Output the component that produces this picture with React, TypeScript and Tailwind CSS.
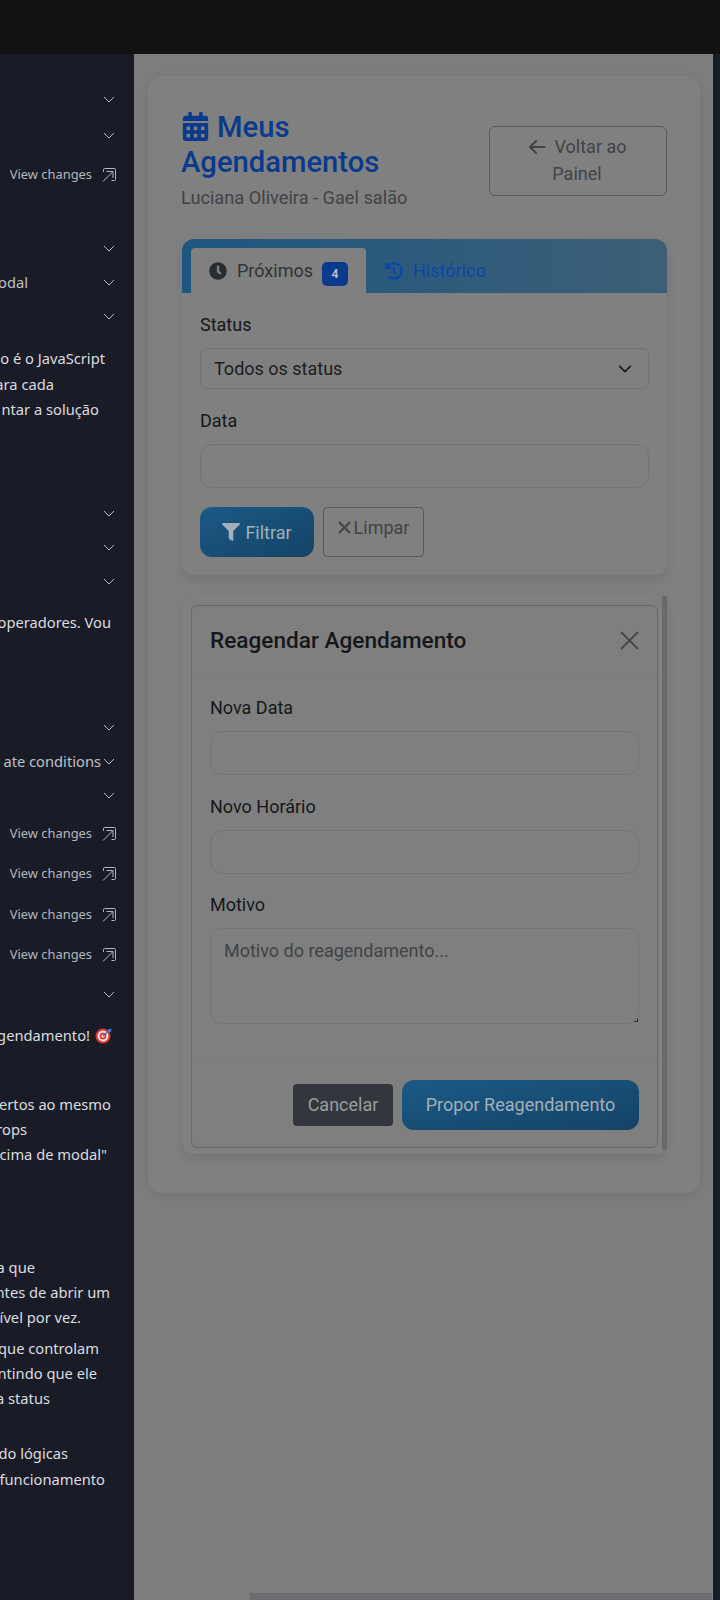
import React from "react";
import { FaCalendarAlt, FaClock, FaHistory, FaFilter } from "react-icons/fa";

function ChevronIcon() {
  return (
    <svg className="shrink-0" width="12" height="7" viewBox="0 0 12 7" fill="none" stroke="#b9bbc1" strokeWidth="1">
      <path d="M1 1l5 5 5-5" />
    </svg>
  );
}

function Chevron({ className = "" }: { className?: string }) {
  return (
    <div className={`h-6 flex items-center justify-end pr-[19px] ${className}`}>
      <ChevronIcon />
    </div>
  );
}

function ChevronText({ text, className = "", gap = "mr-[2px]" }: { text: string; className?: string; gap?: string }) {
  return (
    <div className={`h-6 flex items-center justify-end pr-[19px] overflow-hidden whitespace-nowrap text-[14.7px] text-[#bfc1c6] ${className}`}>
      <span className={`shrink-0 ${gap}`}>{text}</span>
      <ChevronIcon />
    </div>
  );
}

function ViewChanges({ className = "" }: { className?: string }) {
  return (
    <div className={`h-6 flex items-center justify-end pr-[18px] text-[12.9px] text-[#b4b6bc] whitespace-nowrap ${className}`}>
      <span className="mr-[10px]">View changes</span>
      <svg width="14" height="14" viewBox="0 0 14 14" fill="none" stroke="#b4b6bc" strokeWidth="1">
        <path d="M1.5 4V1.5a1 1 0 0 1 1-1h10a1 1 0 0 1 1 1v10a1 1 0 0 1-1 1H9.5" />
        <path d="M1 13.5L10.5 4M4.5 3.5h6.5V10" />
      </svg>
    </div>
  );
}

function Line({ text, className = "" }: { text: string; className?: string }) {
  return (
    <div className={`h-6 flex items-center justify-end overflow-hidden whitespace-nowrap text-[14.7px] text-[#dcdde0] ${className}`}>
      <span className="shrink-0">{text}</span>
    </div>
  );
}

function FieldLabel({ children, className = "" }: { children: React.ReactNode; className?: string }) {
  return <label className={`block text-[18px] leading-[27px] text-[#15171a] ${className}`}>{children}</label>;
}

function TextBox({ className = "" }: { className?: string }) {
  return (
    <input
      readOnly
      className={`block w-full rounded-xl border border-[#727476] bg-transparent outline-none ${className}`}
    />
  );
}

export default function App() {
  return (
    <div className="w-[720px] h-[1600px] overflow-hidden bg-[#111111] flex flex-col font-['Roboto',sans-serif] relative">
      <div className="h-[54px] shrink-0 bg-[#121212]" />
      <div className="flex-1 flex min-h-0">
        <aside className="w-[134px] shrink-0 bg-[#191c26] font-['Noto_Sans',sans-serif] overflow-hidden">
          <Chevron className="mt-[33px]" />
          <Chevron className="mt-[12px]" />
          <ViewChanges className="mt-[16px]" />
          <Chevron className="mt-[49px]" />
          <ChevronText text="odal" gap="mr-[75px]" className="mt-[10px]" />
          <Chevron className="mt-[10px]" />
          <Line text="o é o JavaScript" className="mt-[18px] pr-[29px]" />
          <Line text="ara cada" className="mt-[2px] pr-[80px]" />
          <Line text="ntar a solução" className="mt-[1px] pr-[35px]" />
          <Chevron className="mt-[80px]" />
          <Chevron className="mt-[10px]" />
          <Chevron className="mt-[10px]" />
          <Line text="operadores. Vou" className="mt-[17px] pr-[23px]" />
          <Chevron className="mt-[81px]" />
          <ChevronText text="ate conditions" className="mt-[10px]" />
          <Chevron className="mt-[10px]" />
          <ViewChanges className="mt-[15px]" />
          <ViewChanges className="mt-[16px]" />
          <ViewChanges className="mt-[17px]" />
          <ViewChanges className="mt-[16px]" />
          <Chevron className="mt-[15px]" />
          <div className="mt-[17px] h-6 flex items-center justify-end overflow-hidden whitespace-nowrap text-[14.7px] text-[#dcdde0] pr-[22px]">
            <span className="shrink-0">gendamento!</span>
            <svg className="shrink-0 ml-[5px]" width="17" height="17" viewBox="0 0 17 17">
              <circle cx="8" cy="9" r="7.5" fill="#e2382f" />
              <circle cx="8" cy="9" r="5.4" fill="#f3f1f0" />
              <circle cx="8" cy="9" r="3.5" fill="#e2382f" />
              <circle cx="8" cy="9" r="1.6" fill="#f3f1f0" />
              <path d="M8 9L14 3.5" stroke="#3a6fb5" strokeWidth="1.2" />
              <path d="M12.5 2.5L16.5 1.5L16 5L13.5 5.5Z" fill="#2f7fd0" />
            </svg>
          </div>
          <Line text="ertos ao mesmo" className="mt-[45px] pr-[23px]" />
          <Line text="rops" className="mt-[1px] pr-[107px]" />
          <Line text='cima de modal"' className="mt-[1px] pr-[27px]" />
          <Line text="a que" className="mt-[89px] pr-[99px]" />
          <Line text="ntes de abrir um" className="mt-[1px] pr-[24px]" />
          <Line text="ível por vez." className="mt-[1px] pr-[53px]" />
          <Line text="que controlam" className="mt-[7px] pr-[35px]" />
          <Line text="ntindo que ele" className="mt-[1px] pr-[37px]" />
          <Line text="a status" className="mt-[1px] pr-[84px]" />
          <Line text="do lógicas" className="mt-[31px] pr-[66px]" />
          <Line text="funcionamento" className="mt-[2px] pr-[29px]" />
        </aside>

        <main className="flex-1 min-w-0 bg-[#7d7d7e] pl-[14px] pr-[13px] pt-[22px] relative">
          <div className="rounded-[14px] bg-[#808080] shadow-[0_2px_10px_rgba(0,0,0,0.08)] pl-[34px] pr-[33px] pt-[34px] pb-[39px]">
            <div className="flex items-center justify-between -ml-[1px]">
              <div className="w-[290px]">
                <h1 className="text-[29.2px] leading-[35px] font-medium text-[#0a3a8c]">
                  <FaCalendarAlt className="inline-block align-[-4px] mr-[7px] text-[29px]" />
                  Meus Agendamentos
                </h1>
                <p className="mt-[4px] text-[18.2px] leading-[27px] text-[#404347]">Luciana Oliveira - Gael salão</p>
              </div>
              <button className="mt-[1px] w-[178px] h-[70px] rounded-md border border-[#55585c] pb-[2px] text-[18px] leading-[27px] text-[#404347] text-center pl-[18px] pr-[20px]">
                <svg className="inline-block mr-[9px] align-[-2px]" width="18" height="16" viewBox="0 0 18 16" fill="none" stroke="currentColor" strokeWidth="2" strokeLinecap="round" strokeLinejoin="round">
                  <path d="M16.5 8H2M8 2L2 8l6 6" />
                </svg>
                Voltar ao Painel
              </button>
            </div>

            <section className="mt-[28px] rounded-xl bg-[#808080] shadow-[0_4px_12px_rgba(0,0,0,0.1)]">
              <div className="h-[54px] rounded-t-xl bg-gradient-to-r from-[#1d5680] to-[#3c5f77] pl-[9px] pt-[9px] flex">
                <div className="w-[175px] h-[45px] rounded-t-[4px] bg-[#808080] flex items-center pl-[18px] text-[18px] text-[#303337]">
                  <FaClock className="text-[18px] text-[#2a2d30]" />
                  <span className="ml-[10px]">Próximos</span>
                  <span className="ml-[9px] mt-[6px] w-[26px] h-[24px] rounded-[5px] bg-[#0a3a8c] flex items-center justify-center text-[12px] font-bold text-[#b3bfd6]">4</span>
                </div>
                <div className="flex items-center pl-[19px] text-[18px] text-[#0b46a8]">
                  <FaHistory className="text-[18px]" />
                  <span className="ml-[10px]">Histórico</span>
                </div>
              </div>
              <div className="px-[18px] pt-[18px] pb-[18px]">
                <FieldLabel>Status</FieldLabel>
                <div className="mt-[10px] relative">
                  <select className="block w-full h-[41px] appearance-none rounded-md border border-[#727476] bg-transparent pl-[13px] text-[18px] text-[#1b1d1f] outline-none">
                    <option>Todos os status</option>
                  </select>
                  <svg className="absolute right-[17px] top-[14px]" width="14" height="14" viewBox="0 0 16 16" fill="none" stroke="#1b1d1f" strokeWidth="2" strokeLinecap="round" strokeLinejoin="round">
                    <path d="M2 5l6 6 6-6" />
                  </svg>
                </div>
                <FieldLabel className="mt-[18px]">Data</FieldLabel>
                <TextBox className="mt-[10px] h-[44px]" />
                <div className="mt-[19px] flex gap-[9px]">
                  <button className="w-[114px] h-[50px] rounded-xl bg-gradient-to-br from-[#1a5a86] to-[#154366] flex items-center justify-center text-[18px] text-[#a3afb9]">
                    <FaFilter className="text-[18px] mr-[5px]" />
                    Filtrar
                  </button>
                  <button className="w-[101px] h-[50px] rounded-[4px] border border-[#55585c] flex items-center justify-center pb-[9px] text-[18px] text-[#404347]">
                    <svg className="mr-[3px]" width="13" height="13" viewBox="0 0 13 13" fill="none" stroke="currentColor" strokeWidth="2">
                      <path d="M1 1l11 11M12 1L1 12" />
                    </svg>
                    Limpar
                  </button>
                </div>
              </div>
            </section>

            <section className="mt-[21px] h-[558px] rounded-xl bg-[#808080] shadow-[0_4px_12px_rgba(0,0,0,0.1)] flex">
              <div className="flex-1 min-w-0 pl-[9px] pr-[4px] pt-[9px]">
                <div className="h-[543px] rounded-md border border-[#65676a] bg-[#7f7f7f] flex flex-col">
                  <div className="h-[71px] shrink-0 border-b border-[#7a7a7a] flex items-center justify-between pl-[18px] pr-[18px] pb-[1px]">
                    <h2 className="text-[22.6px] font-medium text-[#15171a]">Reagendar Agendamento</h2>
                    <svg width="19" height="19" viewBox="0 0 19 19" fill="none" stroke="#45484b" strokeWidth="1.8">
                      <path d="M1 1l17 17M18 1L1 18" />
                    </svg>
                  </div>
                  <div className="flex-1 px-[18px] pt-[17px]">
                    <FieldLabel>Nova Data</FieldLabel>
                    <TextBox className="mt-[10px] h-[44px]" />
                    <FieldLabel className="mt-[18px]">Novo Horário</FieldLabel>
                    <TextBox className="mt-[10px] h-[44px]" />
                    <FieldLabel className="mt-[17px]">Motivo</FieldLabel>
                    <div className="relative mt-[10px]">
                      <textarea
                        readOnly
                        placeholder="Motivo do reagendamento..."
                        className="block w-full h-[96px] resize-none rounded-xl border border-[#727476] bg-transparent px-[13px] py-[8px] text-[18px] leading-[27px] text-[#1b1d1f] placeholder:text-[#404347] outline-none"
                      />
                      <svg className="absolute right-[1px] bottom-[2px]" width="4" height="4" viewBox="0 0 4 4" stroke="#2a2a2a" strokeWidth="1" fill="none">
                        <path d="M0.5 3.5h3v-3" />
                      </svg>
                    </div>
                  </div>
                  <div className="h-[86px] shrink-0 border-t border-[#7a7a7a] flex items-center justify-end gap-[9px] px-[18px]">
                    <button className="w-[100px] h-[42px] rounded-[4px] bg-[#33373d] text-[18px] text-[#9b9da0]">Cancelar</button>
                    <button className="w-[237px] h-[50px] rounded-xl bg-gradient-to-br from-[#1a5a86] to-[#154366] text-[18px] text-[#a3afb9]">Propor Reagendamento</button>
                  </div>
                </div>
              </div>
              <div className="w-[5px] h-[554px] shrink-0 bg-[#696969]" />
            </section>
          </div>
          <div className="absolute left-[116px] right-[1px] bottom-0 h-[7px] bg-[#6b6b70]" />
        </main>
        <div className="w-[7px] shrink-0 bg-[#181c28]" />
      </div>
    </div>
  );
}
